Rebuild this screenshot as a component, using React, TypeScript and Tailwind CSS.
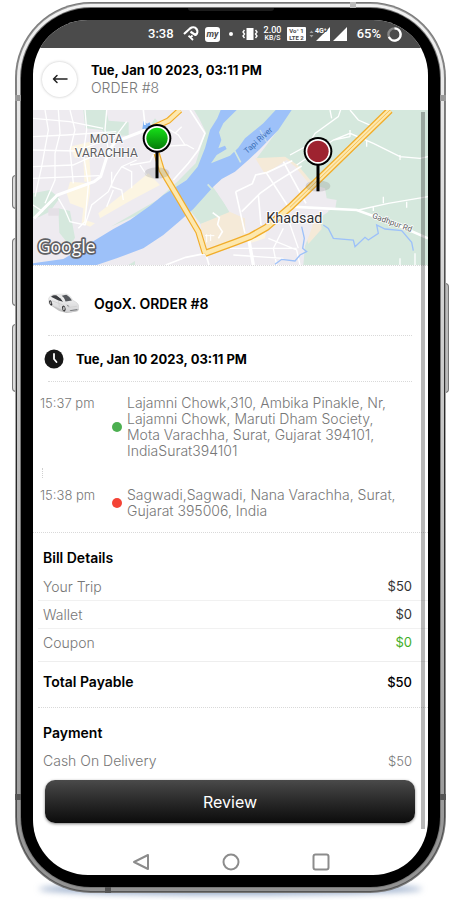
import type { ReactNode } from "react";

const billRows = [
  { label: "Your Trip", value: "$50", color: "text-[#333333]" },
  { label: "Wallet", value: "$0", color: "text-[#333333]" },
  { label: "Coupon", value: "$0", color: "text-[#3fae29]" },
];

const stops = [
  {
    time: "15:37 pm",
    lines: [
      "Lajamni Chowk,310, Ambika Pinakle, Nr,",
      "Lajamni Chowk, Maruti Dham Society,",
      "Mota Varachha, Surat, Gujarat 394101,",
      "IndiaSurat394101",
    ],
    dot: "bg-[#4caf50]",
  },
  {
    time: "15:38 pm",
    lines: ["Sagwadi,Sagwadi, Nana Varachha, Surat,", "Gujarat 395006, India"],
    dot: "bg-[#f44336]",
  },
];

function StatusBar() {
  return (
    <div className="flex h-7 items-center justify-end gap-1.5 bg-[#4b4b4b] pr-[26px] font-['Roboto',sans-serif] text-white">
      <span className="w-[29px] text-[13px] leading-4 font-medium">3:38</span>
      <svg viewBox="0 0 16 16" className="h-4 w-4" fill="none" stroke="currentColor" strokeWidth="2.200" strokeLinejoin="round">
        <path d="M1 8L7 2.500C9 1 12 1 13.500 3c1.500 2 1 4.500-1 6L7.500 5.800" />
        <path d="M9.500 9.500l-2 2 2.500 2.500M5.500 9.800l2 1.700" strokeWidth="1.800" />
      </svg>
      <span className="flex h-[15px] w-[15px] items-center justify-center rounded-[3px] bg-white text-[9px] leading-3 font-bold text-[#4b4b4b] italic">my</span>
      <span className="flex w-[10px] justify-center">
        <span className="h-1 w-1 rounded-full bg-white" />
      </span>
      <svg viewBox="0 0 16 14" className="h-[14px] w-4" fill="none" stroke="currentColor">
        <rect x="4.500" y="1" width="7" height="12" fill="currentColor" stroke="none" />
        <path d="M2.500 3L1 5l1.500 2L1 9l1.500 2M13.500 3L15 5l-1.500 2L15 9l-1.500 2" strokeWidth="1.400" />
      </svg>
      <span className="flex w-[17px] flex-col items-center font-medium">
        <span className="text-[9px] leading-[9px]">2.00</span>
        <span className="text-[7px] leading-[7px]">KB/S</span>
      </span>
      <span className="flex w-[19px] flex-col items-center rounded-[1px] bg-white text-[6px] leading-[7px] font-bold text-[#4b4b4b]">
        <span>Vo° 1</span>
        <span>LTE 2</span>
      </span>
      <svg viewBox="0 0 35 16" className="h-4 w-[35px] overflow-visible" fill="currentColor">
        <path d="M-2.500 7l2-2.500 2 2.500zM-2.500 9l2 2.500 2-2.500z" opacity=".45" />
        <path d="M18 1v14H4zM35 1v14H21z" />
        <text x="3" y="7" fontSize="7" fontWeight="700" stroke="#4b4b4b" strokeWidth="2" paintOrder="stroke">4G⁺</text>
      </svg>
      <span className="w-[28px] text-right text-[13px] leading-4 font-medium whitespace-nowrap">65%</span>
      <svg viewBox="0 0 16 16" className="h-[15px] w-[15px]" fill="none" strokeWidth="2.500">
        <circle cx="8" cy="8" r="6.500" stroke="#888888" />
        <path d="M8 1.500A6.500 6.500 0 1 1 2 10.500" stroke="#ffffff" />
      </svg>
    </div>
  );
}

function Pin({ x, y, fill }: { x: number; y: number; fill: string }) {
  return (
    <g transform={`translate(${x} ${y})`}>
      <ellipse cx="0" cy="104" rx="37" ry="17" fill="#777777" opacity=".22" />
      <path d="M0 30v90" stroke="#000000" strokeWidth="9" />
      <circle r="43" fill="#000000" />
      <circle r="37" fill="#ffffff" />
      <circle r="32" fill={fill} />
    </g>
  );
}

function RouteMap() {
  return (
    <svg
      viewBox="9 15 1185 465"
      preserveAspectRatio="xMidYMid slice"
      className="block h-[155px] w-full font-['Roboto',sans-serif]"
      role="img"
      aria-label="Map of the trip"
    >
      <defs>
        <linearGradient id="pin-green" x1="0" y1="0" x2="0" y2="1">
          <stop offset="0" stopColor="#16e018" />
          <stop offset="1" stopColor="#067d0a" />
        </linearGradient>
      </defs>
      <rect x="9" y="15" width="1185" height="465" fill="#eeebf0" />

      {/* parks and fields */}
      <g fill="#d5e8dd">
        <path d="M160 15h68l8 32 60 5v40l-70-2-10-15-50-5z" />
        <path d="M9 265l50-10 30 25-30 40-30 15-20 5zM85 310l35 8 15 80-15 25-32-40z" />
        <path d="M492 15h90l-50 115-25 70-60 40-60 50-65 40-80 35 140-80 60-55 55-55 30-95-20-40z" />
        <path d="M545 235l30 45 25 45-88 32-35-45z" />
        <path d="M680 160L740 80l35-65h425v465H820l10-115 65-45-15-55-60-45-50-55z" />
        <path d="M295 480l20-12v12zM365 55l10-15 10 12v14z" />
      </g>
      <path d="M675 160l90-5 38 25 52 62 20 130-40 45-25-85-75-110-40-10z" fill="#f5ead8" />
      <path d="M512 357l88-37 45 20 5 50-130 50z" fill="#f5ead8" />
      <path
        d="M545 240l25-22 105-60 30 50 65-43 26 20 40 50 49 15 5 30 30 5-4 25-58 20-20 60-16 40-5 50H650l-5-140-45-20z"
        fill="#eeebf0"
      />

      {/* built-up blocks */}
      <g fill="#fcf5e2">
        <path d="M120 230l60 5v30l-15 80 30 10-15 10-25-10 5-45-40-15-10-30zM205 325l95-75 55-45 35 35-85 45-95 55z" />
        <path d="M120 125l60-15v30l-45 20zM160 160h18l5 70h-20zM650 385l60-15-5 30-45 15z" />
      </g>
      <path d="M55 310h32v22H55z" fill="#e4e0e6" />

      {/* river */}
      <path
        d="M9 475L100 462 180 415 250 372 300 345 360 302 400 270 470 225 503 185 525 130 540 75 562 40 572 15H785L745 75 690 132 655 165 615 200 575 222 550 245 490 312 445 352 400 390 340 430 260 460 200 480H9z"
        fill="#9dc1f9"
      />
      <path d="M620 15L580 55 567 82 574 105 565 130 585 122 590 132 560 150 543 175 600 152 625 128 645 100 700 55 737 15z" fill="#d5e8dd" />
      <path d="M610 130l22 42M533 238l28 30" stroke="#d5e8dd" strokeWidth="5" />
      <path d="M690 75l20 36" stroke="#c3dbee" strokeWidth="4" />
      <path d="M337 72l4-24 10 8 8-4 6 20z" fill="#80b3f5" />

      {/* minor roads */}
      <g fill="none" stroke="#ffffff" strokeWidth="4">
        <path d="M9 40l110 10 100 20M9 95l100-5 150-10M9 135l130 3 80-30M9 185l120-5 90-40M9 220l200-8M9 300l30 20" />
        <path d="M45 15l10 60-20 110-20 90M85 15l5 70-15 60 0 80-30 70M120 15l15 60-15 60 10 100M165 15l5 60-10 70 15 95-10 110-20 20M230 15l-5 60 10 60M290 50l-45 60" />
        <path d="M85 280l20 35 15 35 45 10 20-60 50-40 20-45 20-30 45-20M245 200l0 45 30 10 5 30M275 185l30 15v50M250 255l-20 50M300 180l60-10 15-30" />
        <path d="M395 60l50 30 20 30M380 125l90-5 22 12M435 85l20-20M330 180l20 30" />
      </g>
      <g fill="none" stroke="#ffffff" strokeWidth="5">
        <path d="M480 15l45 70-20 50-30 40-45 50M340 15l5 45" />
        <path d="M12 340l70-70 110-40 20-15 25-80 20-25 90-35" strokeWidth="9" />
        <path d="M617 260l50-24 10-26 35-8 75-35M635 320l55-55 45-32 80-50M760 170l68 125M710 205l68 105M617 260l28 125M685 270l8 90M655 400l15 80" />
        <path d="M655 395l15 85" strokeWidth="10" />
        <path d="M715 400l85 35 10 45M770 330l35 100M600 430h200M610 450l150 10M760 370l-30 60 10 50" strokeWidth="4" />
        <path d="M780 150l55-30 20-35 70-50 10-30M800 180l110-75 50-20 70 30 80 40 60 5 24-5M960 15l25 30 45 20M910 105l50-10M1010 105v20M1110 150v15M960 75v20" strokeWidth="4" />
        <path d="M780 305l200 10 110 40 104 45" strokeWidth="8" />
        <path d="M985 315l90-20 119-20M1060 275v20M1130 290v18M1030 303v15M900 15l5 25M1110 460v20M1155 445v35" strokeWidth="4" />
        <path d="M527 445l-60 12-60 23M527 445l10 35M548 323l20 15-5 20 14 22-12 20" />
        <path d="M525 392h28M530 388v24M542 388v20" strokeWidth="3" />
      </g>

      {/* creeks */}
      <path
        d="M815 365l8 35-5 30 12 10-20 10-15 18-40-5-20 15M880 360l15 10 15 30 60 5 5 20 30-28 10 8 30-20-5-25 25 12 50 5 30 35 5 25"
        fill="none"
        stroke="#9dc1f9"
        strokeWidth="4"
      />

      {/* highway */}
      <g fill="none" strokeLinejoin="round">
        <g stroke="#f1ad2b" strokeWidth="19">
          <path d="M450 15l-35 32-50 23" />
          <path d="M380 145l15 50 45 75 65 110 20 65" />
          <path d="M525 445l90-33 45-17 50-28 70-60L1080 15" strokeWidth="22" />
        </g>
        <g stroke="#fde8ae" strokeWidth="12">
          <path d="M450 15l-35 32-50 23" />
          <path d="M380 145l15 50 45 75 65 110 20 65" />
          <path d="M525 445l90-33 45-17 50-28 70-60L1080 15" strokeWidth="14" />
        </g>
        <path d="M780 307L1080 15" stroke="#f5c056" strokeWidth="3" />
      </g>

      <g fill="#5c5c60" stroke="#ffffff" strokeWidth="4" paintOrder="stroke" textAnchor="middle">
        <text x="229" y="114" fontSize="36">MOTA</text>
        <text x="229" y="156" fontSize="36">VARACHHA</text>
        <text x="793" y="353" fontSize="43" fill="#303134" strokeWidth="6">Khadsad</text>
        <text fontSize="24" transform="translate(1084 360) rotate(20)">Gadhpur Rd</text>
        <text fontSize="24" fill="#3b70b8" stroke="none" transform="translate(690 112) rotate(-42)">Tapi River</text>
      </g>
      <text
        x="23"
        y="443"
        fontSize="53"
        fontWeight="500"
        fill="#ffffff"
        stroke="#5f6064"
        strokeWidth="10"
        strokeLinejoin="round"
        paintOrder="stroke"
        className="font-['Open_Sans',sans-serif]"
      >
        Google
      </text>

      <Pin x={381} y={100} fill="url(#pin-green)" />
      <Pin x={864} y={139} fill="#9e2330" />
    </svg>
  );
}

function CarIcon() {
  return (
    <svg viewBox="0 0 92 62" className="h-[21px] w-[31px] shrink-0">
      <defs>
        <linearGradient id="car-body" x1="0" y1="0" x2="0" y2="1">
          <stop offset="0" stopColor="#f7f7f7" />
          <stop offset="1" stopColor="#d2d2d4" />
        </linearGradient>
      </defs>
      <path d="M3 33l30 20 22 6 33-5 3-6-40 4z" fill="#9b9b9b" opacity=".6" />
      <path d="M2 16C5 8 12 4 22 4l32-1c8 1 14 9 20 19 9 4 16 9 17 16v12c-10 6-30 8-39 6L35 47 3 32z" fill="url(#car-body)" stroke="#b8b8b8" />
      <path d="M9 11c5-5 11-5 17-4l12 9 7 10-14-4z" fill="#3c3e42" />
      <path d="M40 8l14-3c7 3 12 9 17 17l-19 3C50 17 46 12 40 8z" fill="#55585d" />
      <path d="M26 7l11-2 13 20-5 1-7-10z" fill="#e9e9e9" />
      <path d="M60 43l27-4M12 23l32 12M31 23l3 18" stroke="#cccccc" strokeWidth="2" />
      <ellipse cx="8" cy="29" rx="4" ry="8" transform="rotate(-18 8 29)" fill="#29292b" />
      <ellipse cx="8" cy="29" rx="2" ry="5" fill="#b5b5b5" />
      <ellipse cx="47" cy="46" rx="5" ry="9" transform="rotate(-15 47 46)" fill="#29292b" />
      <ellipse cx="47" cy="46" rx="3" ry="6" fill="#b5b5b5" />
      <path d="M55 34l9 5-5 1zM64 51l24-4-2 4-19 2z" fill="#747679" />
    </svg>
  );
}

function Divider({ children, className = "" }: { children?: ReactNode; className?: string }) {
  return <div className={`border-t border-dotted border-[#d9d9d9] ${className}`}>{children}</div>;
}

function NavBar() {
  return (
    <nav className="flex items-center justify-center gap-[72px] text-[#8c8c8c]">
      <button type="button" aria-label="Back">
        <svg viewBox="0 0 18 18" className="block h-[18px] w-[18px]" fill="none" stroke="currentColor" strokeWidth="2" strokeLinejoin="round">
          <path d="M16 2v14L2 9z" />
        </svg>
      </button>
      <button type="button" aria-label="Home">
        <svg viewBox="0 0 18 18" className="block h-[18px] w-[18px]" fill="none" stroke="currentColor" strokeWidth="2">
          <circle cx="9" cy="9" r="7.500" />
        </svg>
      </button>
      <button type="button" aria-label="Recent apps">
        <svg viewBox="0 0 18 18" className="block h-[18px] w-[18px]" fill="none" stroke="currentColor" strokeWidth="2">
          <rect x="1.500" y="1.500" width="15" height="15" rx="2" />
        </svg>
      </button>
    </nav>
  );
}

function Screen() {
  return (
    <div className="relative flex flex-1 flex-col overflow-hidden rounded-[55px] bg-white">
      <StatusBar />

      <header className="flex h-[62px] items-center gap-3.5 px-[9px]">
        <button type="button" aria-label="Go back" className="flex h-[35px] w-[35px] items-center justify-center rounded-full bg-white shadow-[0_0_3px_rgba(0,0,0,0.25)]">
          <svg viewBox="0 0 16 10" className="h-[10px] w-4" fill="none" stroke="#222222" strokeWidth="1.500" strokeLinecap="round" strokeLinejoin="round">
            <path d="M15 5H1.500M5 1.500L1.500 5 5 8.500" />
          </svg>
        </button>
        <div>
          <h1 className="text-[13px] leading-[18px] font-bold">Tue, Jan 10 2023, 03:11 PM</h1>
          <p className="text-sm leading-[18px] font-light text-[#777777]">ORDER #8</p>
        </div>
      </header>

      <RouteMap />

      <Divider />
      <div className="mr-4 ml-[15px] flex h-[69px] items-center gap-[15px] pt-1.5">
        <CarIcon />
        <h2 className="text-sm leading-4 font-semibold">OgoX. ORDER #8</h2>
      </div>
      <Divider className="mr-4 ml-[15px]" />
      <div className="mx-[11px] flex h-[45px] items-center gap-3">
        <svg viewBox="0 0 20 20" className="h-5 w-5">
          <circle cx="10" cy="10" r="9.500" fill="#171717" />
          <path d="M10 5v5l2.500 3" fill="none" stroke="#ffffff" strokeWidth="1.800" strokeLinecap="round" />
        </svg>
        <h2 className="text-[13px] leading-4 font-bold">Tue, Jan 10 2023, 03:11 PM</h2>
      </div>
      <Divider className="mr-4 ml-[15px]" />

      <ol className="flex flex-col gap-7 pt-[13px] pb-[13px] pl-[7px]">
        {stops.map((stop, i) => (
          <li key={stop.time} className="relative flex text-sm leading-4 font-light text-[#777777]">
            <span className="w-[72px] shrink-0 text-[13px]">{stop.time}</span>
            <span className={`mr-[5px] h-[10px] w-[10px] shrink-0 self-center rounded-full ${stop.dot}`} />
            <span className="flex flex-col whitespace-nowrap">
              {stop.lines.map((line) => (
                <span key={line}>{line}</span>
              ))}
            </span>
            {i === 0 && <span className="absolute top-[73px] left-0.5 h-[10px] border-l border-dotted border-[#d0d0d0]" />}
          </li>
        ))}
      </ol>

      <Divider className="pt-4 pr-4 pl-[10px]">
        <h2 className="text-sm leading-[18px] font-semibold">Bill Details</h2>
      </Divider>
      <dl className="ml-[5px] pt-1.5 text-sm leading-[27px]">
        {billRows.map((row) => (
          <div key={row.label} className="flex justify-between border-b border-[#f1f1f1] pr-4 pl-[5px] last:border-0">
            <dt className="font-light text-[#777777]">{row.label}</dt>
            <dd className={`text-[13px] ${row.color}`}>{row.value}</dd>
          </div>
        ))}
      </dl>
      <div className="mt-[5px] ml-[5px] flex h-[46px] items-center justify-between border-t border-[#eeeeee] pr-4 pb-1.5 pl-[5px] text-sm leading-4">
        <h2 className="font-semibold">Total Payable</h2>
        <span className="text-[13px] font-medium">$50</span>
      </div>
      <Divider className="ml-[5px] pt-4 pr-4 pl-[5px]">
        <h2 className="text-sm leading-[18px] font-semibold">Payment</h2>
        <div className="flex justify-between pt-1 text-sm leading-[30px] font-light text-[#777777]">
          <span>Cash On Delivery</span>
          <span className="text-[13px]">$50</span>
        </div>
      </Divider>

      <div className="mt-auto pb-1">
        <button
          type="button"
          className="mb-[30px] ml-3 block h-[43px] w-[calc(100%-25px)] rounded-[10px] bg-linear-to-b from-[#4a4a4a] to-[#0c0c0c] text-base text-white shadow-[0_1px_3px_rgba(0,0,0,0.5)]"
        >
          Review
        </button>
        <NavBar />
      </div>

      {/* scroll thumb */}
      <div className="absolute top-[92px] right-[3px] bottom-[46px] w-1 bg-black/28" />
    </div>
  );
}

export default function App() {
  return (
    <main className="flex min-h-screen bg-white pt-0.5 pr-[14px] pb-[7px] pl-[15px] font-['Inter',sans-serif] text-black">
      <div className="relative flex flex-1">
        {/* ground shadow */}
        <div className="absolute inset-x-6 -bottom-0.5 h-3 rounded-[50%] bg-[#5273a5]/60 blur-[3px]" />

        {/* side keys */}
        <div className="absolute top-[173px] -left-[3px] h-[34px] w-1 rounded-l-sm border border-[#777777] bg-[#dddddd]" />
        <div className="absolute top-[236px] -left-[3px] h-[68px] w-1 rounded-l-sm border border-[#777777] bg-[#dddddd]" />
        <div className="absolute top-[322px] -left-[3px] h-[68px] w-1 rounded-l-sm border border-[#777777] bg-[#dddddd]" />
        <div className="absolute top-[281px] -right-[3px] h-[110px] w-1 rounded-r-sm border border-[#777777] bg-[#bbbbbb]" />

        {/* metal band */}
        <div className="relative flex flex-1 rounded-[76px] bg-linear-to-b from-[#777777] via-[#aaaaaa] to-[#777777] p-px">
          <div className="flex flex-1 rounded-[75px] bg-linear-to-b from-[#999999] via-[#222222] to-[#555555] p-px">
            <div className="flex flex-1 rounded-[74px] bg-linear-to-b from-[#f2f2f2] via-[#c4c4c4] to-[#929292] p-[3px]">
              <div className="flex flex-1 rounded-[71px] bg-[#777777] p-px">
                <div className="flex flex-1 rounded-[70px] bg-black p-3">
                  <Screen />
                </div>
              </div>
            </div>
          </div>
          {/* antenna lines and speaker */}
          <div className="absolute top-[93px] left-0 h-[6px] w-[6px] bg-[#999999]" />
          <div className="absolute top-[93px] right-0 h-[6px] w-[6px] bg-[#999999]" />
          <div className="absolute bottom-[93px] left-0 h-[6px] w-[6px] bg-[#555555]" />
          <div className="absolute right-0 bottom-[93px] h-[6px] w-[6px] bg-[#555555]" />
          <div className="absolute top-0 right-[90px] h-[6px] w-[6px] bg-[#bbbbbb]" />
          <div className="absolute bottom-0 left-[90px] h-[6px] w-[6px] bg-[#555555]" />
          <div className="absolute inset-x-0 top-[6px] mx-auto h-[3px] w-[86px] rounded-b bg-[#1c1c1c]" />
        </div>
      </div>
    </main>
  );
}
